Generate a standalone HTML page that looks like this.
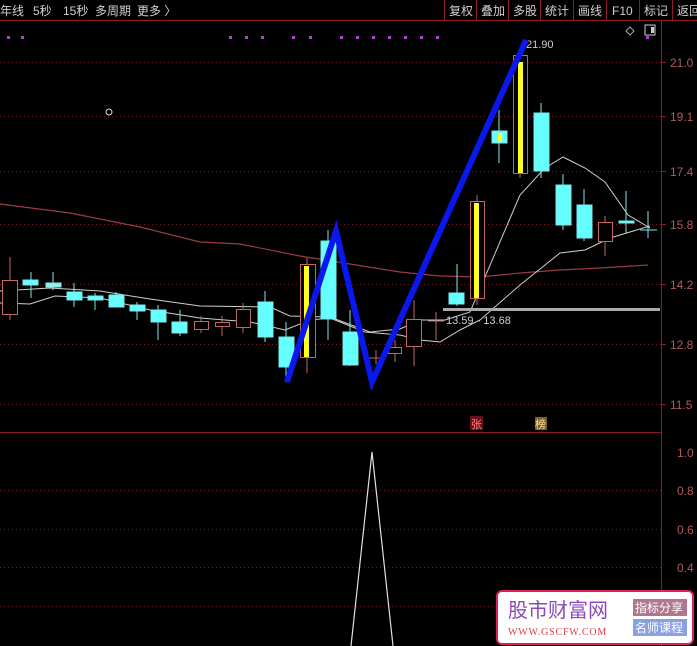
<!DOCTYPE html>
<html><head><meta charset="utf-8"><style>
html,body{margin:0;padding:0;background:#000;width:697px;height:646px;overflow:hidden}
svg{display:block}
text{font-family:"Liberation Sans","Noto Sans CJK SC",sans-serif}
text.serif{font-family:"Liberation Serif","Noto Serif CJK SC",serif}
</style></head><body>
<svg width="697" height="646" viewBox="0 0 697 646" xmlns="http://www.w3.org/2000/svg">
<rect width="697" height="646" fill="#000"/>
<g fill="#d0d0d0" font-size="12">
<text x="0" y="15">年线</text><text x="33" y="15">5秒</text><text x="63" y="15">15秒</text><text x="95" y="15">多周期</text><text x="137" y="15">更多 〉</text>
<text x="449" y="15">复权</text><text x="481" y="15">叠加</text><text x="513" y="15">多股</text><text x="545" y="15">统计</text><text x="578" y="15">画线</text><text x="612" y="15">F10</text><text x="644" y="15">标记</text><text x="677" y="15">返回</text>
</g>
<g stroke="#8a1e24" stroke-width="1">
<line x1="0" y1="20.5" x2="697" y2="20.5"/>
<line x1="444.5" y1="0" x2="444.5" y2="20"/><line x1="476.5" y1="0" x2="476.5" y2="20"/><line x1="508.5" y1="0" x2="508.5" y2="20"/><line x1="540.5" y1="0" x2="540.5" y2="20"/><line x1="573.5" y1="0" x2="573.5" y2="20"/><line x1="606.5" y1="0" x2="606.5" y2="20"/><line x1="639.5" y1="0" x2="639.5" y2="20"/><line x1="672.5" y1="0" x2="672.5" y2="20"/>
<line x1="661.5" y1="20" x2="661.5" y2="646"/>
<line x1="0" y1="432.5" x2="661" y2="432.5"/>
</g>
<g stroke="#6a1f24" stroke-width="1" stroke-dasharray="1,3">
<line x1="0" y1="62.5" x2="661" y2="62.5"/><line x1="0" y1="116.5" x2="661" y2="116.5"/><line x1="0" y1="171.5" x2="661" y2="171.5"/><line x1="0" y1="224.5" x2="661" y2="224.5"/><line x1="0" y1="284.5" x2="661" y2="284.5"/><line x1="0" y1="344.5" x2="661" y2="344.5"/><line x1="0" y1="404.5" x2="661" y2="404.5"/>
<line x1="0" y1="490.5" x2="661" y2="490.5"/><line x1="0" y1="529.5" x2="661" y2="529.5"/><line x1="0" y1="567.5" x2="661" y2="567.5"/><line x1="0" y1="606.5" x2="661" y2="606.5"/>
</g>
<g fill="#b05a5e" font-size="12">
<text x="670" y="67">21.0</text><text x="670" y="121">19.1</text><text x="670" y="176">17.4</text><text x="670" y="229">15.8</text><text x="670" y="289">14.2</text><text x="670" y="349">12.8</text><text x="670" y="409">11.5</text>
<text x="677" y="457">1.0</text><text x="677" y="495">0.8</text><text x="677" y="534">0.6</text><text x="677" y="572">0.4</text><text x="677" y="611">0.2</text>
</g>
<g stroke="#8a1e24"><line x1="662" y1="62.5" x2="666" y2="62.5"/><line x1="662" y1="116.5" x2="666" y2="116.5"/><line x1="662" y1="171.5" x2="666" y2="171.5"/><line x1="662" y1="224.5" x2="666" y2="224.5"/><line x1="662" y1="284.5" x2="666" y2="284.5"/><line x1="662" y1="344.5" x2="666" y2="344.5"/><line x1="662" y1="404.5" x2="666" y2="404.5"/></g>
<g fill="#b040d0">
<rect x="7" y="36" width="3" height="3"/><rect x="21" y="36" width="3" height="3"/><rect x="229" y="36" width="3" height="3"/><rect x="245" y="36" width="3" height="3"/><rect x="261" y="36" width="3" height="3"/><rect x="292" y="36" width="3" height="3"/><rect x="309" y="36" width="3" height="3"/><rect x="340" y="36" width="3" height="3"/><rect x="356" y="36" width="3" height="3"/><rect x="372" y="36" width="3" height="3"/><rect x="388" y="36" width="3" height="3"/><rect x="404" y="36" width="3" height="3"/><rect x="420" y="36" width="3" height="3"/><rect x="436" y="36" width="3" height="3"/><rect x="646" y="36" width="3" height="3"/>
</g>
<path d="M630 27 L634 31 L630 35 L626 31 Z" fill="none" stroke="#aaa"/>
<rect x="645" y="25" width="10" height="10" fill="none" stroke="#ccc"/><rect x="651" y="27" width="3" height="6" fill="#ccc"/>
<circle cx="109" cy="112" r="3" fill="none" stroke="#ddd"/>
<polyline fill="none" stroke="#9a3a45" stroke-width="1.2" points="0,204 70,213 140,227 200,242 240,244 300,256 350,264 400,272 440,276 480,277 520,273 560,270 600,268 648,265"/>
<polyline fill="none" stroke="#cfcfcf" stroke-width="1" points="0,291 50,288 100,291 150,299 200,306 270,307 290,316 330,317 370,332 400,329 420,320 445,320 470,312 520,195 545,168 563,157 585,168 605,182 628,215 650,228"/>
<polyline fill="none" stroke="#cfcfcf" stroke-width="1" points="0,303 30,304 55,296 100,298 150,310 200,318 250,322 285,330 310,320 330,318 365,332 400,335 420,340 440,342 460,330 480,320 520,285 560,253 585,250 610,238 650,226"/>
<g stroke-width="1">
<g stroke="#c06868" fill="none">
<line x1="10" y1="257" x2="10" y2="320"/><rect x="2.5" y="280.5" width="15" height="34" fill="#000"/>
<line x1="201" y1="316" x2="201" y2="333"/><rect x="194.5" y="321.5" width="14" height="8" fill="#000"/>
<line x1="222" y1="316" x2="222" y2="336"/><rect x="215.5" y="322.5" width="14" height="4" fill="#000"/>
<line x1="243" y1="303" x2="243" y2="333"/><rect x="236.5" y="309.5" width="14" height="18" fill="#000"/>
<line x1="307" y1="258" x2="307" y2="373"/><rect x="300.5" y="264.5" width="15" height="93" fill="#000"/>
<line x1="376" y1="350" x2="376" y2="364"/><line x1="369" y1="358" x2="383" y2="358"/>
<line x1="395" y1="340" x2="395" y2="362"/><rect x="388.5" y="347.5" width="13" height="6" fill="#000"/>
<line x1="414" y1="300" x2="414" y2="366"/><rect x="406.5" y="319.5" width="15" height="27" fill="#000"/>
<line x1="436" y1="312" x2="436" y2="340"/><line x1="428" y1="321" x2="444" y2="321"/>
<line x1="477" y1="195" x2="477" y2="305"/><rect x="470.5" y="201.5" width="14" height="97" fill="#000"/>
<line x1="520" y1="50" x2="520" y2="178"/><rect x="513.5" y="55.5" width="14" height="118" fill="#000"/>
<line x1="605" y1="216" x2="605" y2="256"/><rect x="598.5" y="222.5" width="14" height="19" fill="#000"/>
</g>
<rect x="304" y="266" width="5" height="91" fill="#ffff20"/>
<rect x="474" y="203" width="5" height="95" fill="#ffff20"/>
<rect x="518" y="62" width="5" height="111" fill="#ffff20"/>
<g stroke="#7ee8e8" fill="#6ff" >
<line x1="31" y1="272" x2="31" y2="298"/><rect x="23" y="280" width="15" height="5"/>
<line x1="53" y1="272" x2="53" y2="290"/><rect x="46" y="283" width="15" height="4" fill="#9ee"/>
<line x1="74" y1="283" x2="74" y2="307"/><rect x="67" y="292" width="15" height="8"/>
<line x1="95" y1="293" x2="95" y2="310"/><rect x="88" y="296" width="15" height="4"/>
<line x1="116" y1="292" x2="116" y2="307"/><rect x="109" y="295" width="15" height="12"/>
<line x1="137" y1="302" x2="137" y2="320"/><rect x="130" y="305" width="15" height="6"/>
<line x1="158" y1="305" x2="158" y2="340"/><rect x="151" y="310" width="15" height="12"/>
<line x1="180" y1="310" x2="180" y2="336"/><rect x="172" y="322" width="15" height="11"/>
<line x1="265" y1="291" x2="265" y2="342"/><rect x="258" y="302" width="15" height="35"/>
<line x1="286" y1="322" x2="286" y2="382"/><rect x="279" y="337" width="15" height="30"/>
<line x1="328" y1="230" x2="328" y2="340"/><rect x="321" y="241" width="15" height="78"/>
<line x1="350" y1="310" x2="350" y2="366"/><rect x="343" y="332" width="15" height="33"/>
<line x1="457" y1="264" x2="457" y2="306"/><rect x="449" y="293" width="15" height="11"/>
<line x1="499" y1="110" x2="499" y2="163"/><rect x="492" y="131" width="15" height="12"/>
<line x1="541" y1="103" x2="541" y2="178"/><rect x="534" y="113" width="15" height="58"/>
<line x1="563" y1="174" x2="563" y2="230"/><rect x="556" y="185" width="15" height="40"/>
<line x1="584" y1="189" x2="584" y2="241"/><rect x="577" y="205" width="15" height="33"/>
<line x1="626" y1="191" x2="626" y2="233"/><rect x="619" y="221" width="15" height="2"/>
<line x1="648" y1="211" x2="648" y2="238"/><line x1="640" y1="230" x2="657" y2="230"/>
</g>
<rect x="498" y="133" width="4" height="9" fill="#ffff20"/>
</g>
<rect x="443" y="308" width="217" height="3" fill="#aaa"/>
<text x="446" y="324" fill="#cfcfcf" font-size="11">13.59 - 13.68</text>
<text x="526" y="48" fill="#cfcfcf" font-size="11">21.90</text>
<polyline fill="none" stroke="#0a18ee" stroke-width="6" stroke-linejoin="miter" points="287,382 336,231 372,382 526,40"/>
<rect x="470" y="416" width="13" height="14" fill="#6a1018"/><text x="471" y="428" fill="#ff8080" font-size="11">张</text>
<rect x="535" y="417" width="12" height="13" fill="#7a6020"/><text x="535" y="428" fill="#ffe0a0" font-size="11">榜</text>
<polyline fill="none" stroke="#e0e0e0" stroke-width="1.2" points="351,646 372,452 393,646"/>
<rect x="497" y="591" width="196" height="53" rx="5" fill="#fff" stroke="#e0205a" stroke-width="2"/>
<text x="508" y="617" fill="#8a4ab8" font-size="20">股市财富网</text>
<text class="serif" x="508" y="635" fill="#d84040" font-size="10" letter-spacing="0.8">WWW.GSCFW.COM</text>
<rect x="633" y="599" width="54" height="17" fill="#b07890"/><text x="635" y="612" fill="#fff" font-size="12">指标分享</text>
<rect x="633" y="619" width="54" height="17" fill="#8aa0e0"/><text x="635" y="632" fill="#fff" font-size="12">名师课程</text>
</svg>
</body></html>
